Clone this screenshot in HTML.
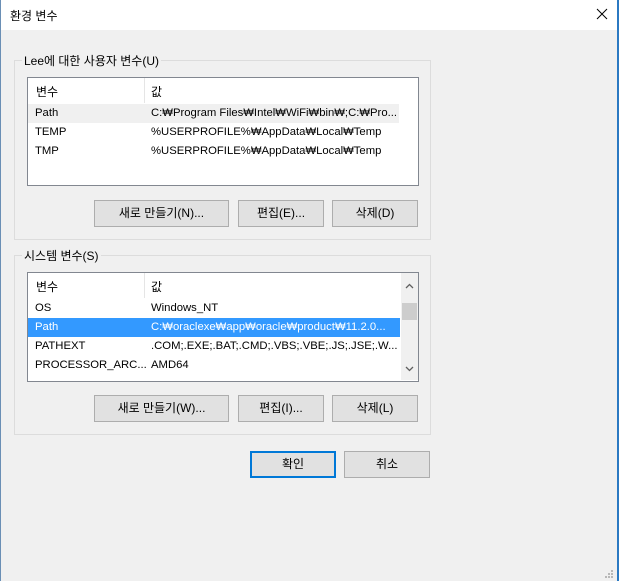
<!DOCTYPE html><html><head><meta charset="utf-8"><style>
*{box-sizing:border-box;margin:0;padding:0}
body{width:620px;height:581px;background:#fff;font-family:"Liberation Sans","Noto Sans CJK KR",sans-serif;font-size:12px;color:#000;position:relative;overflow:hidden}
.win{position:absolute;left:0;top:0;width:619px;height:581px;background:#f0f0f0;border-left:1px solid #6a8fb5;border-right:2px solid #2b79c2}
.title{position:absolute;left:0;top:0;width:100%;height:30px;background:#fff}
.title span{position:absolute;left:9px;top:7px;font-size:12px}
.x{position:absolute;left:595px;top:8px}
.grp{position:absolute;left:13px;width:417px;border:1px solid #dcdcdc}
.lbl{position:absolute;left:7px;top:-7px;background:#f0f0f0;padding:0 2px;line-height:14px}
.list{position:absolute;left:12px;width:392px;background:#fff;border:1px solid #828790;overflow:hidden}
.hd{position:absolute;left:0;top:0;height:25px;width:372px}
.hd span{position:absolute;top:5px}
.hdv{position:absolute;left:116px;top:0;width:1px;height:25px;background:#e5e5e5}
.row{position:absolute;left:0;height:19px;width:372px;line-height:19px;white-space:nowrap;font-size:11.3px}
.row .a{position:absolute;left:7px}
.row .b{position:absolute;left:123px}
.btn{position:absolute;height:27px;border:1px solid #adadad;background:#e1e1e1;text-align:center;line-height:25px}
.sb{position:absolute;right:0;top:0;width:17px;height:107px;background:#f0f0f0}
</style></head><body><div class="win">
<div class="title"><span>환경 변수</span>
<svg class="x" width="12" height="12" viewBox="0 0 12 12"><path d="M1 1L11 11M11 1L1 11" stroke="#000" stroke-width="1"/></svg></div>

<div class="grp" style="top:60px;height:180px"><div class="lbl">Lee에 대한 사용자 변수(U)</div>
<div class="list" style="top:16px;height:109px">
<div class="hd"><span style="left:8px">변수</span><span style="left:123px">값</span><div class="hdv"></div></div>
<div class="row" style="top:26px;background:#f0f0f0;width:371px"><span class="a">Path</span><span class="b">C:₩Program Files₩Intel₩WiFi₩bin₩;C:₩Pro...</span></div>
<div class="row" style="top:45px"><span class="a">TEMP</span><span class="b">%USERPROFILE%₩AppData₩Local₩Temp</span></div>
<div class="row" style="top:64px"><span class="a">TMP</span><span class="b">%USERPROFILE%₩AppData₩Local₩Temp</span></div>
</div>
<div class="btn" style="left:79px;top:139px;width:135px">새로 만들기(N)...</div>
<div class="btn" style="left:223px;top:139px;width:86px">편집(E)...</div>
<div class="btn" style="left:317px;top:139px;width:86px">삭제(D)</div>
</div>

<div class="grp" style="top:255px;height:180px"><div class="lbl">시스템 변수(S)</div>
<div class="list" style="top:16px;height:110px">
<div class="hd"><span style="left:8px">변수</span><span style="left:123px">값</span><div class="hdv"></div></div>
<div class="row" style="top:26px"><span class="a">OS</span><span class="b">Windows_NT</span></div>
<div class="row" style="top:45px;background:#3399ff;color:#fff"><span class="a">Path</span><span class="b">C:₩oraclexe₩app₩oracle₩product₩11.2.0...</span></div>
<div class="row" style="top:64px"><span class="a">PATHEXT</span><span class="b">.COM;.EXE;.BAT;.CMD;.VBS;.VBE;.JS;.JSE;.W...</span></div>
<div class="row" style="top:83px"><span class="a">PROCESSOR_ARC...</span><span class="b">AMD64</span></div>
<div class="sb">
<svg style="position:absolute;left:4px;top:10px" width="9" height="6"><path d="M1 5L4.5 1.5L8 5" stroke="#606060" fill="none" stroke-width="1.3"/></svg>
<div style="position:absolute;left:1px;top:30px;width:15px;height:17px;background:#cdcdcd"></div>
<svg style="position:absolute;left:4px;top:93px" width="9" height="6"><path d="M1 1L4.5 4.5L8 1" stroke="#606060" fill="none" stroke-width="1.3"/></svg>
</div>
</div>
<div class="btn" style="left:79px;top:139px;width:135px">새로 만들기(W)...</div>
<div class="btn" style="left:223px;top:139px;width:86px">편집(I)...</div>
<div class="btn" style="left:317px;top:139px;width:86px">삭제(L)</div>
</div>

<div class="btn" style="left:249px;top:451px;width:86px;border:2px solid #0078d7;line-height:23px">확인</div>
<div class="btn" style="left:343px;top:451px;width:86px">취소</div>
<svg style="position:absolute;left:603px;top:569px" width="10" height="10"><g fill="#b8b8b8"><rect x="7" y="1" width="2" height="2"/><rect x="4" y="4" width="2" height="2"/><rect x="7" y="4" width="2" height="2"/><rect x="1" y="7" width="2" height="2"/><rect x="4" y="7" width="2" height="2"/><rect x="7" y="7" width="2" height="2"/></g></svg>
</div></body></html>
